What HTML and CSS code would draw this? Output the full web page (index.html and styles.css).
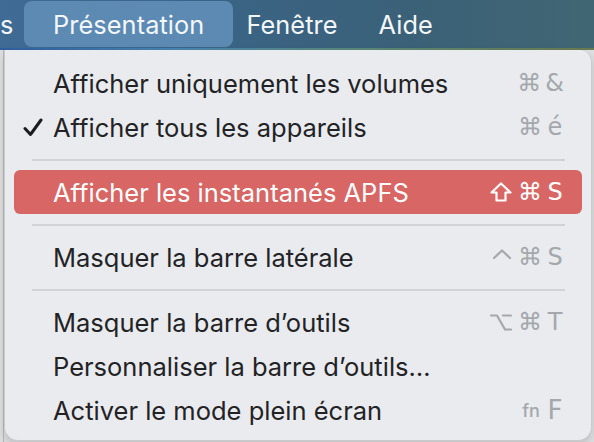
FILE: index.html
```html
<!DOCTYPE html>
<html lang="fr">
<head>
<meta charset="utf-8">
<link rel="stylesheet" href="styles.css">
</head>
<body>
<div class="menubar">
  <span class="mb-item mb-cut">s</span>
  <span class="mb-item mb-active">Présentation</span>
  <span class="mb-item mb-win">Fenêtre</span>
  <span class="mb-item mb-help">Aide</span>
</div>
<div class="strip"></div>
<div class="stage">
  <div class="bgwin"></div>
  <div class="menu">
    <div class="row"><span class="check"></span><span class="label">Afficher uniquement les volumes</span><span class="keys"><span class="k">⌘</span><span class="k">&amp;</span></span></div>
    <div class="row"><span class="check"><svg class="tick" viewBox="0 0 20 19" width="20" height="19"><polyline points="2,10.5 7.5,16.5 18,2" /></svg></span><span class="label">Afficher tous les appareils</span><span class="keys"><span class="k">⌘</span><span class="k">é</span></span></div>
    <div class="sep"></div>
    <div class="row hl"><span class="check"></span><span class="label">Afficher les instantanés APFS</span><span class="keys"><svg class="ico" viewBox="0 0 22 20" width="22" height="20"><path d="M11 1.5 L20.5 10.5 L15.5 10.5 L15.5 18.5 L6.5 18.5 L6.5 10.5 L1.5 10.5 Z" /></svg><span class="k">⌘</span><span class="k">S</span></span></div>
    <div class="sep"></div>
    <div class="row"><span class="check"></span><span class="label">Masquer la barre latérale</span><span class="keys"><svg class="ico" viewBox="0 0 20 19" width="20" height="19"><polyline points="2,10 10,2.5 18,10" /></svg><span class="k">⌘</span><span class="k">S</span></span></div>
    <div class="sep"></div>
    <div class="row"><span class="check"></span><span class="label">Masquer la barre d’outils</span><span class="keys"><svg class="ico" viewBox="0 0 22 19" width="22" height="19"><path d="M1 2.5 H7 L15 16.5 H21 M13 2.5 H21" /></svg><span class="k">⌘</span><span class="k">T</span></span></div>
    <div class="row"><span class="check"></span><span class="label">Personnaliser la barre d’outils…</span><span class="keys"></span></div>
    <div class="row"><span class="check"></span><span class="label">Activer le mode plein écran</span><span class="keys"><span class="k fn">fn</span><span class="k fkey">F</span></span></div>
  </div>
</div>
</body>
</html>
```

FILE: styles.css
```css
* { box-sizing: border-box; }
html, body { margin: 0; padding: 0; }
body {
  width: 594px;
  height: 442px;
  overflow: hidden;
  background: #dedfe1;
  font-family: Inter, "Noto Sans", "DejaVu Sans", sans-serif;
}
.menubar {
  height: 48px;
  display: flex;
  align-items: stretch;
  background: linear-gradient(90deg, #3f6b95 0%, #3a6486 35%, #3b6178 70%, #416673 100%);
  color: #f4f7fa;
  font-size: 25.3px;
}
.mb-item {
  display: flex;
  align-items: center;
  padding: 0;
  letter-spacing: 0.1px;
}
.mb-cut { width: 24px; padding-left: 0; }
.mb-active {
  background: #5d8ab3;
  border-radius: 8px;
  padding: 0 29px 0 29px;
  margin: 1px 0;
}
.mb-win { margin-left: 13px; }
.mb-help { margin-left: 41px; }
.strip {
  height: 2px;
  background: linear-gradient(90deg, #2f5fa0 0%, #4a86b0 30%, #5a8a7a 60%, #6a7a50 100%);
}
.stage {
  display: flex;
  height: 392px;
}
.bgwin {
  width: 4px;
  background: #dfdfe0;
  border-right: 1px solid #b8b8ba;
}
.menu {
  width: 588px;
  height: 391px;
  background: #e9ebef;
  border-radius: 0 12px 14px 14px;
  border: 1px solid #c9cbcf;
  border-top: none;
  padding: 11px 9px 0 9px;
  display: flex;
  flex-direction: column;
  box-shadow: 0 4px 10px rgba(0,0,0,0.15);
}
.row {
  height: 44px;
  display: flex;
  align-items: center;
  font-size: 25.5px;
  color: #232325;
  border-radius: 6px;
  padding-right: 18px;
}
.check {
  width: 39px;
  padding-left: 9px;
  display: flex;
  align-items: center;
}
.tick {
  fill: none;
  stroke: #1c1c1e;
  stroke-width: 3;
  stroke-linecap: round;
  stroke-linejoin: round;
}
.label { flex: 1; }
.keys {
  display: flex;
  gap: 4px;
  color: #a4a7ac;
  font-size: 24px;
  align-items: center;
}
.k { min-width: 18px; text-align: center; }
.keys .k:not(.fn) { font-family: "DejaVu Sans", Inter, sans-serif; }
.ico {
  fill: none;
  stroke: currentColor;
  stroke-width: 2.2;
  stroke-linejoin: round;
  stroke-linecap: round;
  margin-right: 2px;
}
.fn { font-size: 18px; margin-right: 2px; font-weight: 500; }
.keys .fkey { font-family: Inter, sans-serif; font-size: 26px; font-weight: 400; }
.hl {
  background: #d76665;
  color: #fff;
}
.hl .keys { color: #fff; }
.sep {
  height: 2px;
  background: #d0d2d6;
  margin: 10px 17px 9px 18px;
}
```
